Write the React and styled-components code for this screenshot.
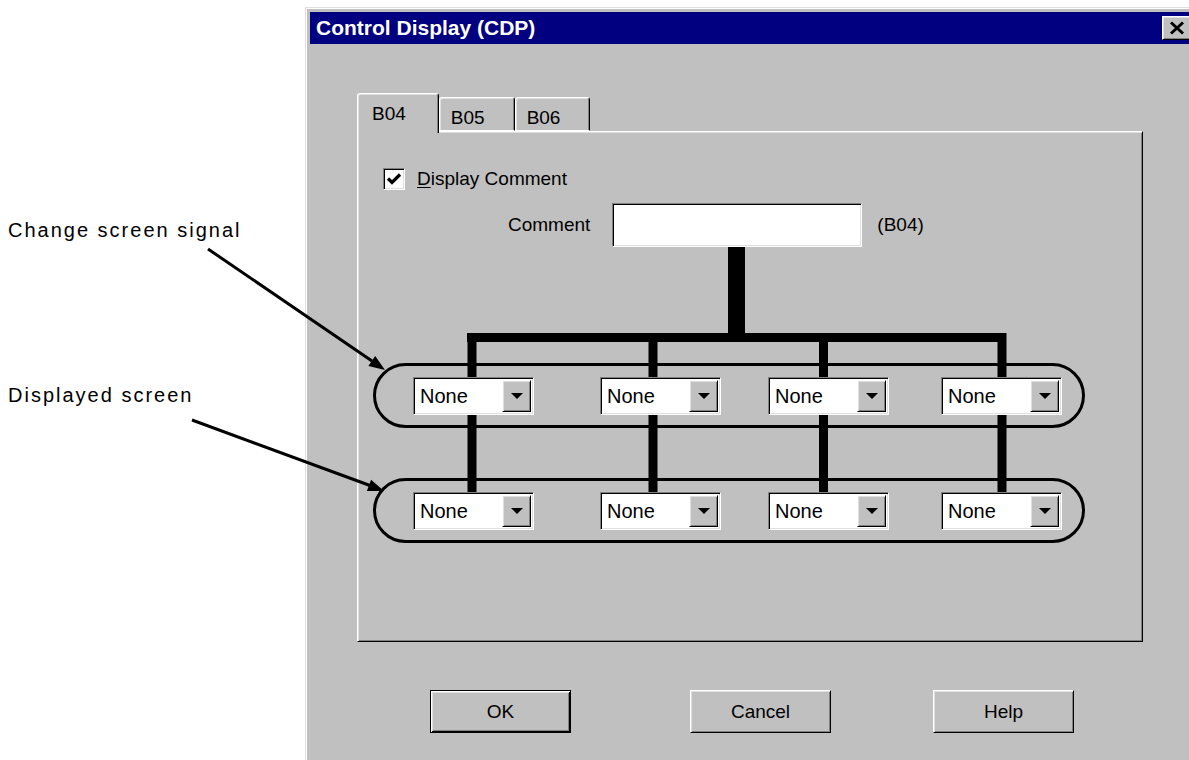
import React from "react";
import styled, { createGlobalStyle, css } from "styled-components";

const GlobalStyle = createGlobalStyle`
  html, body { margin: 0; padding: 0; background: #ffffff; }
  body { font-family: "Liberation Sans", Arial, sans-serif; color: #000; }
  * { box-sizing: border-box; }
`;

const Page = styled.div`
  position: relative;
  width: 1189px;
  height: 760px;
  overflow: hidden;
  display: flex;
  align-items: flex-start;
`;

const Annotations = styled.div`
  width: 305px;
  flex-shrink: 0;
  display: flex;
  flex-direction: column;
  gap: 141px;
  padding: 218px 0 0 8px;
`;

const Callout = styled.div`
  font-family: "Liberation Sans", Arial, sans-serif;
  font-size: 20px;
  line-height: 24px;
  letter-spacing: 2px;
  white-space: nowrap;
`;

const ArrowLayer = styled.svg`
  position: absolute;
  left: 0;
  top: 0;
  width: 1189px;
  height: 760px;
  pointer-events: none;
  z-index: 5;
`;

const Dialog = styled.div`
  flex-shrink: 0;
  width: 895px;
  height: 800px;
  margin-top: 7px;
  padding: 5px;
  background: #c0c0c0;
  box-shadow: inset 1px 1px #dfdfdf, inset 2px 2px #ffffff,
    inset -1px -1px #000000, inset -2px -2px #808080;
  font-family: "Liberation Sans", Arial, sans-serif;
  font-size: 19px;
`;

const TitleBar = styled.div`
  height: 32px;
  background: #000080;
  display: flex;
  align-items: center;
  padding: 0 4px 0 6px;
`;

const TitleText = styled.div`
  color: #ffffff;
  font-weight: bold;
  font-size: 21px;
  line-height: 24px;
  white-space: nowrap;
`;

const bevelRaised = css`
  background: #c0c0c0;
  border: 1px solid;
  border-color: #ffffff #000000 #000000 #ffffff;
  box-shadow: inset 1px 1px #dfdfdf, inset -1px -1px #808080;
`;

const bevelSunken = css`
  border: 1px solid;
  border-color: #808080 #ffffff #ffffff #808080;
  box-shadow: inset 1px 1px #000000, inset -1px -1px #dfdfdf;
`;

const CloseButton = styled.div`
  ${bevelRaised}
  margin-left: auto;
  width: 29px;
  height: 24px;
  display: flex;
  align-items: center;
  justify-content: center;
`;

const Body = styled.div`
  padding: 49px 0 0 47px;
`;

const TabStrip = styled.div`
  display: flex;
  align-items: flex-end;
  height: 38px;
`;

const Tab = styled.div`
  position: relative;
  background: #c0c0c0;
  border-top: 1px solid #ffffff;
  border-left: 1px solid #ffffff;
  border-right: 1px solid #000000;
  border-radius: 3px 3px 0 0;
  box-shadow: inset 1px 1px #dfdfdf, inset -1px 0 #808080;
  line-height: 19px;
  white-space: nowrap;
  ${(p) =>
    p.$active
      ? css`
          height: 40px;
          margin-bottom: -2px;
          z-index: 2;
          padding: 10px 32px 0 14px;
        `
      : css`
          height: 34px;
          padding: 10px 29px 0 11px;
          border-bottom: 1px solid #ffffff;
        `}
`;

const Panel = styled.div`
  position: relative;
  width: 786px;
  height: 511px;
  border: 1px solid;
  border-color: #ffffff #000000 #000000 #ffffff;
  box-shadow: inset 1px 1px #dfdfdf, inset -1px -1px #808080;
  display: flex;
  flex-direction: column;
  align-items: flex-start;
`;

const CheckRow = styled.label`
  display: flex;
  align-items: center;
  gap: 12px;
  margin: 36px 0 0 25px;
  line-height: 22px;
`;

const CheckBox = styled.div`
  ${bevelSunken}
  width: 22px;
  height: 22px;
  background: #ffffff;
  display: flex;
  align-items: center;
  justify-content: center;
`;

const Accel = styled.span`
  text-decoration: underline;
  text-underline-offset: 2px;
`;

const CommentRow = styled.div`
  display: flex;
  align-items: center;
  margin: 13px 0 0 150px;
`;

const FieldLabel = styled.span`
  margin-right: 22px;
`;

const TextField = styled.div`
  ${bevelSunken}
  width: 250px;
  height: 44px;
  background: #ffffff;
  margin-right: 15px;
`;

const Diagram = styled.div`
  position: relative;
  align-self: stretch;
  display: flex;
  flex-direction: column;
  gap: 50px;
  padding: 116px 0 0 15px;
`;

const Wires = styled.svg`
  position: absolute;
  left: 0;
  top: 0;
  width: 784px;
  height: 300px;
  z-index: 0;
`;

const Group = styled.div`
  position: relative;
  z-index: 1;
  width: 712px;
  height: 65px;
  border: 3px solid #000000;
  border-radius: 33px;
  display: grid;
  grid-template-columns: 187px 168px 173px 121px;
  align-items: center;
  padding-left: 37px;
`;

const Combo = styled.div`
  ${bevelSunken}
  width: 121px;
  height: 38px;
  background: #ffffff;
  display: flex;
  align-items: stretch;
  padding: 2px;
`;

const ComboText = styled.div`
  flex: 1;
  font-size: 20px;
  line-height: 32px;
  padding-left: 4px;
`;

const ComboButton = styled.div`
  ${bevelRaised}
  width: 29px;
  display: flex;
  align-items: center;
  justify-content: center;
  &::after {
    content: "";
    border-left: 6px solid transparent;
    border-right: 6px solid transparent;
    border-top: 6px solid #000000;
  }
`;

const ButtonRow = styled.div`
  display: grid;
  grid-template-columns: 260px 243px 141px;
  margin: 48px 0 0 73px;
`;

const Button = styled.div`
  width: 141px;
  height: 43px;
  display: flex;
  align-items: center;
  justify-content: center;
  ${(p) =>
    p.$default
      ? css`
          background: #c0c0c0;
          border: 1px solid #000000;
          box-shadow: inset 1px 1px #ffffff, inset -1px -1px #000000,
            inset 2px 2px #dfdfdf, inset -2px -2px #808080;
        `
      : bevelRaised}
`;

function Dropdown() {
  return (
    <Combo>
      <ComboText>None</ComboText>
      <ComboButton />
    </Combo>
  );
}

function Row() {
  return (
    <Group>
      <Dropdown />
      <Dropdown />
      <Dropdown />
      <Dropdown />
    </Group>
  );
}

const verticals = [114, 295, 465.5, 644];

export default function App() {
  return (
    <>
      <GlobalStyle />
      <Page>
        <Annotations>
          <Callout>Change screen signal</Callout>
          <Callout>Displayed screen</Callout>
        </Annotations>
        <Dialog>
          <TitleBar>
            <TitleText>Control Display (CDP)</TitleText>
            <CloseButton>
              <svg width="16" height="14" viewBox="0 0 16 14">
                <path d="M2 1.5 L14 12.5 M14 1.5 L2 12.5" stroke="#000" strokeWidth="3" fill="none" />
              </svg>
            </CloseButton>
          </TitleBar>
          <Body>
            <TabStrip>
              <Tab $active>B04</Tab>
              <Tab>B05</Tab>
              <Tab>B06</Tab>
            </TabStrip>
            <Panel>
              <CheckRow>
                <CheckBox>
                  <svg width="16" height="16" viewBox="0 0 16 16">
                    <path d="M2 7.5 L6 11.5 L14 3.5" stroke="#000" strokeWidth="3.2" fill="none" />
                  </svg>
                </CheckBox>
                <span>
                  <Accel>D</Accel>isplay Comment
                </span>
              </CheckRow>
              <CommentRow>
                <FieldLabel>Comment</FieldLabel>
                <TextField />
                <span>(B04)</span>
              </CommentRow>
              <Diagram>
                <Wires viewBox="0 0 784 300">
                  <rect x="370" y="0" width="17" height="90" fill="#000" />
                  <rect x="109" y="86" width="539" height="9" fill="#000" />
                  {verticals.map((c) => (
                    <rect key={c} x={c - 4.5} y="86" width="9" height="161" fill="#000" />
                  ))}
                </Wires>
                <Row />
                <Row />
              </Diagram>
            </Panel>
            <ButtonRow>
              <Button $default>OK</Button>
              <Button>Cancel</Button>
              <Button>Help</Button>
            </ButtonRow>
          </Body>
        </Dialog>
        <ArrowLayer viewBox="0 0 1189 760">
          <line x1="208" y1="249" x2="372" y2="361" stroke="#000" strokeWidth="3" />
          <polygon points="385,370 368.4,366 375.2,356" fill="#000" />
          <line x1="192" y1="420" x2="370" y2="485.5" stroke="#000" strokeWidth="3" />
          <polygon points="384,491 366.9,491.1 371.1,479.8" fill="#000" />
        </ArrowLayer>
      </Page>
    </>
  );
}
